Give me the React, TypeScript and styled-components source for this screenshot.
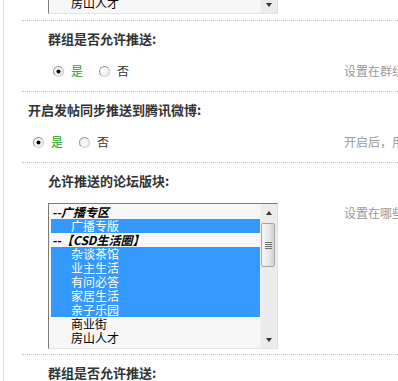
import React from 'react';
import styled, { createGlobalStyle } from 'styled-components';

const GlobalStyle = createGlobalStyle`
  html, body {
    margin: 0;
    padding: 0;
    background: #fff;
    overflow: hidden;
  }
  body {
    font-family: "Noto Sans CJK SC", "Liberation Sans", sans-serif;
    font-size: 12px;
    color: #333;
  }
`;

const Page = styled.div`
  display: flow-root;
  margin-left: 3px;
  border-left: 1px solid #c8dbf1;
  min-height: 100vh;
`;

// the first section is the tail of a listbox scrolled past the top
const Section = styled.div<{ $clipped?: boolean }>`
  margin-left: 18px;
  margin-top: ${(p) => (p.$clipped ? '-132px' : '0')};
  border-top: ${(p) => (p.$clipped ? 'none' : '1px dotted #c4c4c4')};
`;

const Title = styled.div<{ $indent: number }>`
  padding: 9px 0 0 ${(p) => p.$indent}px;
  line-height: 18px;
  font-size: 13px;
  font-weight: bold;
  color: #333;
  white-space: nowrap;
`;

const ValueRow = styled.div<{ $gap: number; $bottom: number }>`
  display: grid;
  grid-template-columns: 322px 1fr;
  margin-top: ${(p) => p.$gap}px;
  padding-bottom: ${(p) => p.$bottom}px;
`;

const Field = styled.div<{ $indent: number; $top?: boolean }>`
  display: flex;
  align-items: ${(p) => (p.$top ? 'flex-start' : 'center')};
  padding-left: ${(p) => p.$indent}px;
  min-height: 20px;
`;

const Hint = styled.div`
  line-height: 20px;
  color: #999;
  white-space: nowrap;
  overflow: hidden;
`;

const RadioOption = styled.label`
  display: inline-flex;
  align-items: center;
  gap: 7px;
  margin-right: 16px;
  line-height: 20px;
`;

const RadioCircle = styled.span<{ $checked?: boolean }>`
  position: relative;
  box-sizing: border-box;
  width: 11px;
  height: 11px;
  border-radius: 50%;
  border: 1px solid;
  border-color: #8c8c8c #c8c8c8 #d8d8d8 #9a9a9a;
  background: radial-gradient(circle at 40% 40%, #ffffff 0%, #f2f2f2 55%, #dedede 100%);

  &::after {
    content: '';
    display: ${(p) => (p.$checked ? 'block' : 'none')};
    position: absolute;
    left: 3px;
    top: 3px;
    width: 3px;
    height: 3px;
    border-radius: 50%;
    background: #000;
    box-shadow: 0 0 0 0.5px #000;
  }
`;

const RadioText = styled.span<{ $on?: boolean }>`
  color: ${(p) => (p.$on ? '#22a022' : '#333')};
`;

const ListBox = styled.div`
  display: flex;
  box-sizing: border-box;
  width: 230px;
  height: 146px;
  border: 1px solid;
  border-color: #7b7b7b #dedede #e4e4e4 #7b7b7b;
  background: #f7f7f7;
`;

const Options = styled.div`
  flex: 1;
  padding: 1px 0 0 2px;
  overflow: hidden;
`;

const Option = styled.div<{ $selected?: boolean; $group?: boolean }>`
  height: 14px;
  line-height: 14px;
  padding-left: ${(p) => (p.$group ? 1 : 20)}px;
  white-space: nowrap;
  overflow: hidden;
  background: ${(p) => (p.$selected ? '#3399ff' : 'transparent')};
  color: ${(p) => (p.$selected ? '#fff' : '#000')};
  font-weight: ${(p) => (p.$group ? 'bold' : 'normal')};
  font-style: ${(p) => (p.$group ? 'italic' : 'normal')};
`;

const ScrollBar = styled.div`
  display: flex;
  flex-direction: column;
  width: 17px;
  background: #ececec;
  border-left: 1px solid #f4f4f4;
  box-sizing: border-box;
`;

const ArrowButton = styled.div<{ $down?: boolean }>`
  display: flex;
  align-items: center;
  justify-content: center;
  height: 17px;

  &::before {
    content: '';
    width: 0;
    height: 0;
    border-left: 3px solid transparent;
    border-right: 3px solid transparent;
    ${(p) => (p.$down ? 'border-top: 4px solid #333;' : 'border-bottom: 4px solid #333;')}
  }
`;

const Track = styled.div`
  flex: 1;
  padding: 2px 2px 0 0;
`;

const Thumb = styled.div`
  display: flex;
  align-items: center;
  justify-content: center;
  box-sizing: border-box;
  height: 44px;
  border: 1px solid #a6a6a6;
  border-radius: 2px;
  background: linear-gradient(to right, #f6f6f6, #e6e6e6 60%, #d2d2d2);
`;

const Grip = styled.div`
  width: 7px;
  height: 7px;
  background: repeating-linear-gradient(to bottom, #6e6e6e 0 1px, transparent 1px 2px);
`;

type ForumOption = { label: string; group?: boolean; selected?: boolean };

const forumOptions: ForumOption[] = [
  { label: '--广播专区', group: true },
  { label: '广播专版', selected: true },
  { label: '--【CSD生活圈】', group: true },
  { label: '杂谈茶馆', selected: true },
  { label: '业主生活', selected: true },
  { label: '有问必答', selected: true },
  { label: '家居生活', selected: true },
  { label: '亲子乐园', selected: true },
  { label: '商业街' },
  { label: '房山人才' },
];

const ForumSelect = () => (
  <ListBox>
    <Options>
      {forumOptions.map((o) => (
        <Option key={o.label} $group={o.group} $selected={o.selected}>
          {o.label}
        </Option>
      ))}
    </Options>
    <ScrollBar>
      <ArrowButton />
      <Track>
        <Thumb>
          <Grip />
        </Thumb>
      </Track>
      <ArrowButton $down />
    </ScrollBar>
  </ListBox>
);

const YesNo = ({ indent }: { indent: number }) => (
  <Field $indent={indent}>
    <RadioOption>
      <RadioCircle $checked />
      <RadioText $on>是</RadioText>
    </RadioOption>
    <RadioOption>
      <RadioCircle />
      <RadioText>否</RadioText>
    </RadioOption>
  </Field>
);

const App = () => (
  <>
    <GlobalStyle />
    <Page>
      <Section $clipped>
        <ValueRow $gap={0} $bottom={6}>
          <Field $indent={26} $top>
            <ForumSelect />
          </Field>
          <Hint>设置在哪些版块中允许推送</Hint>
        </ValueRow>
      </Section>

      <Section>
        <Title $indent={26}>群组是否允许推送:</Title>
        <ValueRow $gap={13} $bottom={10}>
          <YesNo indent={31} />
          <Hint>设置在群组中发帖是否允许推送</Hint>
        </ValueRow>
      </Section>

      <Section>
        <Title $indent={6}>开启发帖同步推送到腾讯微博:</Title>
        <ValueRow $gap={13} $bottom={10}>
          <YesNo indent={11} />
          <Hint>开启后，用户发帖将同步推送到腾讯微博</Hint>
        </ValueRow>
      </Section>

      <Section>
        <Title $indent={26}>允许推送的论坛版块:</Title>
        <ValueRow $gap={13} $bottom={5}>
          <Field $indent={26} $top>
            <ForumSelect />
          </Field>
          <Hint>设置在哪些版块中允许推送</Hint>
        </ValueRow>
      </Section>

      <Section>
        <Title $indent={26}>群组是否允许推送:</Title>
        <ValueRow $gap={13} $bottom={10}>
          <YesNo indent={31} />
          <Hint>设置在群组中发帖是否允许推送</Hint>
        </ValueRow>
      </Section>
    </Page>
  </>
);

export default App;
